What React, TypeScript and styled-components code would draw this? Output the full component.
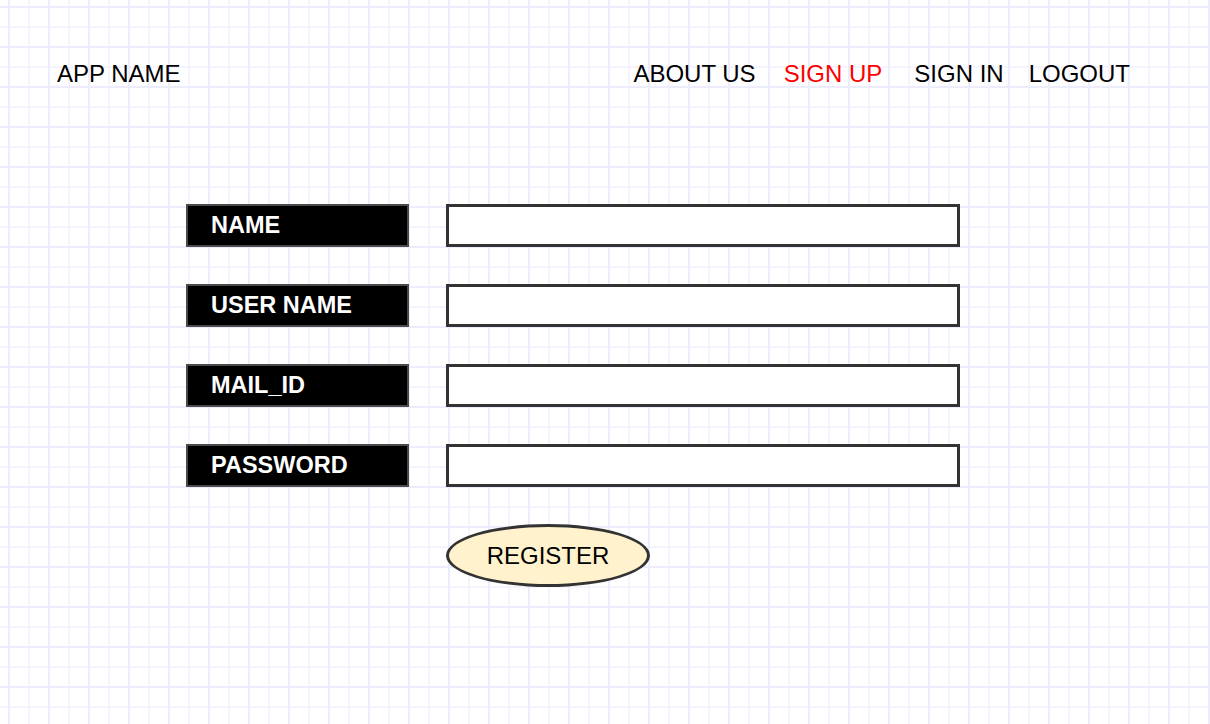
import React from "react";
import styled, { createGlobalStyle } from "styled-components";

const Global = createGlobalStyle`
  html, body {
    margin: 0;
    padding: 0;
    background: #ffffff;
  }
  body {
    font-family: "Liberation Sans", Arial, sans-serif;
  }
  * { box-sizing: border-box; }
`;

const Canvas = styled.div`
  width: 1210px;
  min-height: 724px;
  background-color: #ffffff;
  background-image:
    linear-gradient(to right, #edecfd 2px, transparent 2px),
    linear-gradient(to bottom, #edecfd 2px, transparent 2px),
    linear-gradient(to right, #f5f4fe 2px, transparent 2px),
    linear-gradient(to bottom, #f5f4fe 2px, transparent 2px);
  background-size: 40px 40px, 40px 40px, 20px 20px, 20px 20px;
  background-position: 8px 6px, 8px 6px, 8px 6px, 8px 6px;
  overflow: hidden;
`;

const Header = styled.header`
  display: flex;
  justify-content: space-between;
  align-items: center;
  padding: 60px 80px 0 57px;
  font-size: 24px;
  line-height: 28px;
  color: #000;
`;

const Brand = styled.div`
  white-space: nowrap;
`;

const Nav = styled.nav`
  display: flex;
  align-items: center;
`;

const NavItem = styled.span<{ $active?: boolean; $gap: number }>`
  margin-left: ${(p) => p.$gap}px;
  color: ${(p) => (p.$active ? "#ff0000" : "#000000")};
  white-space: nowrap;
`;

const Form = styled.form`
  display: grid;
  grid-template-columns: 223px 514px;
  column-gap: 37px;
  row-gap: 37px;
  margin: 116px 0 0 186px;
`;

const Label = styled.label`
  display: flex;
  align-items: center;
  height: 43px;
  padding-left: 23px;
  background: #000;
  border: 2px solid #4a4a4a;
  color: #fff;
  font-size: 23.5px;
  font-weight: bold;
`;

const Field = styled.input`
  height: 43px;
  width: 100%;
  margin: 0;
  background: #fff;
  border: 3px solid #333;
  outline: none;
  font-family: inherit;
  font-size: 20px;
`;

const Register = styled.button`
  grid-column: 2;
  justify-self: start;
  width: 204px;
  height: 63px;
  border-radius: 50%;
  background: #fff2cc;
  border: 3px solid #333;
  font-family: "Liberation Sans", Arial, sans-serif;
  font-size: 24px;
  color: #000;
  padding: 0;
  cursor: pointer;
`;

const fields = ["NAME", "USER NAME", "MAIL_ID", "PASSWORD"];

export default function App() {
  return (
    <Canvas>
      <Global />
      <Header>
        <Brand>APP NAME</Brand>
        <Nav>
          <NavItem $gap={0}>ABOUT US</NavItem>
          <NavItem $gap={28} $active>
            SIGN UP
          </NavItem>
          <NavItem $gap={32}>SIGN IN</NavItem>
          <NavItem $gap={25}>LOGOUT</NavItem>
        </Nav>
      </Header>
      <Form onSubmit={(e) => e.preventDefault()}>
        {fields.map((f) => (
          <React.Fragment key={f}>
            <Label>{f}</Label>
            <Field type={f === "PASSWORD" ? "password" : "text"} aria-label={f} />
          </React.Fragment>
        ))}
        <Register type="submit">REGISTER</Register>
      </Form>
    </Canvas>
  );
}
